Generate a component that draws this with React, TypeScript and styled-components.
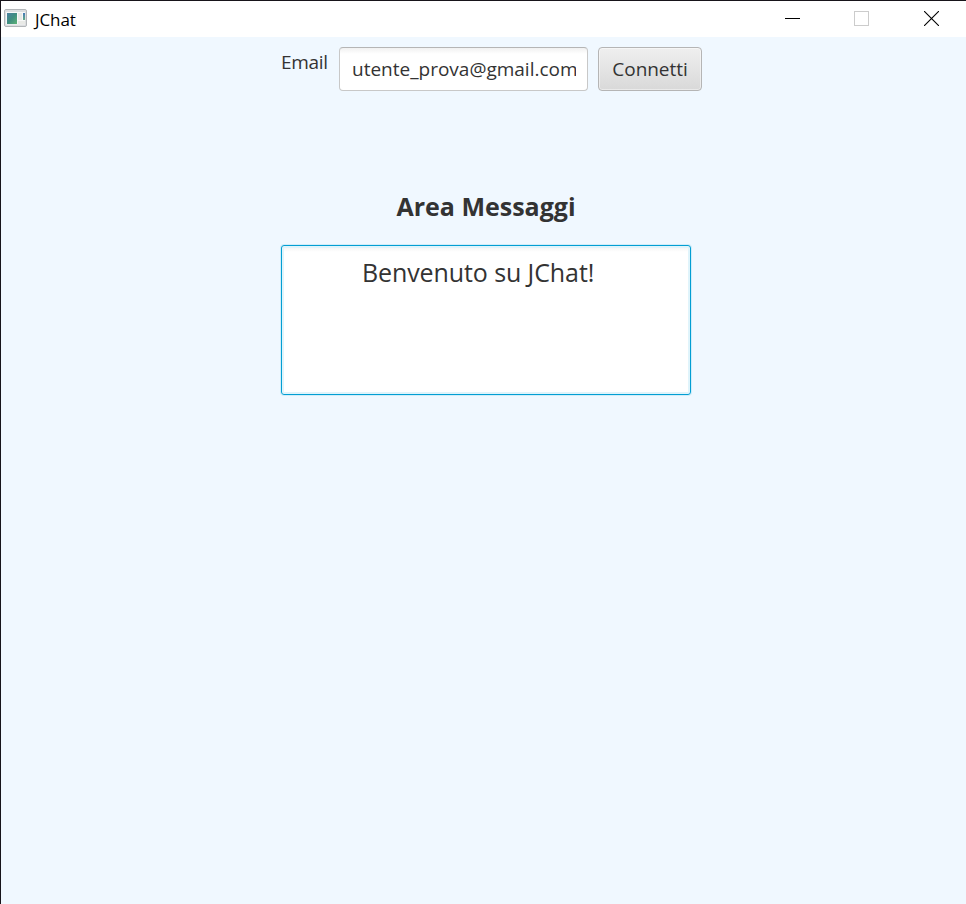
import React from "react";
import styled, { createGlobalStyle } from "styled-components";

const GlobalStyle = createGlobalStyle`
  * { box-sizing: border-box; }
  body { margin: 0; overflow: hidden; font-family: "Open Sans", "Noto Sans", sans-serif; color: #333; }
`;

const Window = styled.div`
  display: flex;
  flex-direction: column;
  height: 904px;
  width: 966px;
  border-top: 1px solid #17141a;
  border-left: 1px solid #17141a;
  background: #f0f8ff;
`;

const TitleBar = styled.header`
  display: flex;
  align-items: center;
  height: 36px;
  flex: none;
  padding-left: 3px;
  background: #fff;
`;

const AppIcon = styled.svg`
  width: 23px;
  height: 20px;
  flex: none;
  margin-bottom: 3px;
`;

const Title = styled.span`
  flex: 1;
  margin-left: 8px;
  padding-top: 1px;
  color: #000;
  font-size: 17px;
  line-height: 24px;
  letter-spacing: -0.1px;
`;

const Controls = styled.div`
  display: flex;
  height: 36px;
`;

const WindowButton = styled.button<{ $muted?: boolean; $width: number }>`
  display: flex;
  align-items: center;
  justify-content: center;
  width: ${(p) => p.$width}px;
  height: 35px;
  padding: 0;
  border: 0;
  background: none;
  color: ${(p) => (p.$muted ? "#ccc" : "#000")};

  svg { display: block; }
`;

const Content = styled.main`
  display: flex;
  flex-direction: column;
  align-items: flex-start;
  padding: 10px 0 0 280px;
`;

const LoginRow = styled.div`
  display: flex;
  height: 44px;
`;

const Label = styled.label`
  width: 58px;
  padding-top: 1px;
  font-size: 19px;
  line-height: 28px;
  letter-spacing: -0.3px;
`;

const EmailField = styled.input`
  width: 249px;
  height: 44px;
  padding: 0 11px 0 12px;
  border: 1px solid #c8c8c8;
  border-top-color: #b5b5b5;
  border-radius: 4px;
  outline: none;
  background: linear-gradient(#f1f1f1, #fff 6px);
  color: #333;
  font: 19px "Open Sans", "Noto Sans", sans-serif;
  letter-spacing: 0;
`;

const ConnectButton = styled.button`
  width: 104px;
  height: 44px;
  margin-left: 10px;
  padding: 0;
  border: 1px solid #b5b5b5;
  border-radius: 4px;
  background: linear-gradient(#efefef, #d9d9d9);
  box-shadow: inset 0 0 0 1px rgba(255, 255, 255, 0.45);
  color: #333;
  font: 19px "Open Sans", "Noto Sans", sans-serif;
  letter-spacing: -0.05px;
`;

const Heading = styled.h1`
  width: 410px;
  margin: 97px 0 0;
  font-size: 25px;
  font-weight: 700;
  line-height: 36px;
  letter-spacing: 0;
  text-align: center;
`;

const MessageArea = styled.section`
  width: 410px;
  height: 150px;
  margin-top: 21px;
  padding: 8px 0 0 80px;
  border: 1px solid #039ed3;
  border-radius: 3px;
  background: linear-gradient(#f1f1f1, #fff 6px);
  box-shadow: 0 0 0 1px #d0edf9, inset 0 0 0 2px #e0f4fb;
  font-size: 25px;
  line-height: 36px;
  letter-spacing: -0.1px;
  white-space: nowrap;
`;

export default function App() {
  return (
    <>
      <GlobalStyle />
      <Window>
        <TitleBar>
          <AppIcon viewBox="0 0 23 20">
            <defs>
              <linearGradient id="pane" x1="0" y1="0" x2="1" y2="1">
                <stop offset="0" stopColor="#4a7fa0" />
                <stop offset="0.5" stopColor="#3f8e80" />
                <stop offset="1" stopColor="#5eb376" />
              </linearGradient>
              <linearGradient id="strip" x1="0" y1="0" x2="0" y2="1">
                <stop offset="0" stopColor="#4579ba" />
                <stop offset="1" stopColor="#63ad83" />
              </linearGradient>
            </defs>
            <rect x="0.5" y="1.5" width="22" height="17" rx="1.5" fill="#dcdee0" stroke="#b3b6b9" />
            <rect x="2" y="4" width="19" height="12.5" fill="#f7f8f8" />
            <rect x="3" y="5" width="10" height="11" fill="url(#pane)" />
            <rect x="14" y="5" width="4" height="7" fill="#e8e9e6" />
            <rect x="14" y="13" width="7" height="3" fill="#e8e9e6" />
            <rect x="19" y="5" width="2" height="7" fill="url(#strip)" />
          </AppIcon>
          <Title>JChat</Title>
          <Controls>
            <WindowButton aria-label="Minimize" $width={68}>
              <svg width="15" height="15" shapeRendering="crispEdges">
                <path d="M0 7.5H15" stroke="currentColor" />
              </svg>
            </WindowButton>
            <WindowButton aria-label="Maximize" $width={71} $muted disabled>
              <svg width="15" height="15">
                <rect x="0.5" y="0.5" width="14" height="14" fill="none" stroke="currentColor" />
              </svg>
            </WindowButton>
            <WindowButton aria-label="Close" $width={69}>
              <svg width="15" height="15">
                <path d="M0 0L15 15M15 0L0 15" stroke="currentColor" strokeWidth="1.1" />
              </svg>
            </WindowButton>
          </Controls>
        </TitleBar>
        <Content>
          <LoginRow>
            <Label htmlFor="email">Email</Label>
            <EmailField id="email" defaultValue="utente_prova@gmail.com" spellCheck={false} />
            <ConnectButton>Connetti</ConnectButton>
          </LoginRow>
          <Heading>Area Messaggi</Heading>
          <MessageArea>Benvenuto su JChat!</MessageArea>
        </Content>
      </Window>
    </>
  );
}
